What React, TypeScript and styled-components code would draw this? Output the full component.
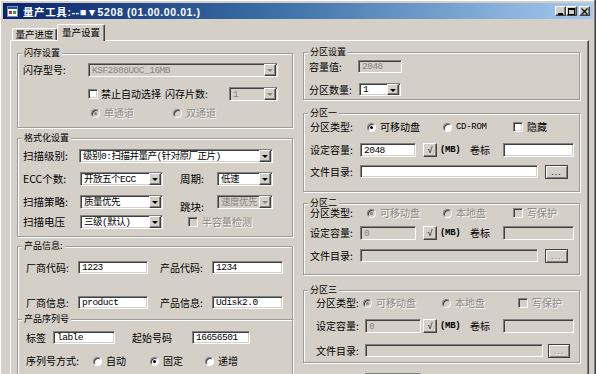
import React from 'react';
import styled, { createGlobalStyle, css } from 'styled-components';

const FACE = '#d4d0c8';

const GlobalStyle = createGlobalStyle`
  html, body {
    margin: 0;
    padding: 0;
    background: ${FACE};
  }
  body {
    font-family: "Noto Sans CJK SC", "Liberation Sans", sans-serif;
    color: #000;
  }
`;

const disabledText = css`
  color: #8a8780;
  text-shadow: 1px 1px 0 #fff;
`;

const raised = css`
  background: ${FACE};
  border: 1px solid;
  border-color: #fff #404040 #404040 #fff;
  box-shadow: inset -1px -1px 0 #808080;
  box-sizing: border-box;
`;

const sunken = css`
  border: 1px solid;
  border-color: #808080 #fff #fff #808080;
  box-shadow: inset 1px 1px 0 #404040, inset -1px -1px 0 ${FACE};
  box-sizing: border-box;
`;

const Window = styled.div`
  width: 596px;
  height: 374px;
  box-sizing: border-box;
  overflow: hidden;
  background: ${FACE};
  padding: 3px 3px 0 3px;
  display: flex;
  flex-direction: column;
  box-shadow: inset -1px 0 0 #404040, inset -2px 0 0 #808080, inset 1px 1px 0 #fff;
`;

const TitleBar = styled.div`
  height: 16px;
  flex: none;
  display: flex;
  align-items: center;
  gap: 5px;
  padding: 0 3px 0 4px;
  background: linear-gradient(to right, #0a246a 0%, #3a6ea5 45%, #a6caf0 100%);
  color: #fff;
  font: bold 10.5px "Liberation Sans", "Noto Sans CJK SC", sans-serif;
  letter-spacing: 0.6px;
  white-space: nowrap;
`;

const TitleButtons = styled.div`
  margin-left: auto;
  display: flex;
  align-items: center;
`;

const CapButton = styled.div<{ $gap?: number }>`
  ${raised};
  width: 11px;
  height: 10px;
  margin-left: ${p => p.$gap ?? 0}px;
  display: flex;
  align-items: center;
  justify-content: center;
`;

const TabStrip = styled.div`
  height: 16px;
  flex: none;
  margin-top: 5px;
  padding-left: 9px;
  display: flex;
  align-items: flex-end;
  position: relative;
  z-index: 1;
`;

const Tab = styled.div<{ $active?: boolean; $w: number }>`
  box-sizing: border-box;
  width: ${p => p.$w}px;
  height: ${p => (p.$active ? 17 : 12)}px;
  margin-bottom: ${p => (p.$active ? -1 : 0)}px;
  background: ${FACE};
  border-top: 1px solid #fff;
  border-left: 1px solid #fff;
  border-right: 1px solid #404040;
  box-shadow: inset -1px 0 0 #808080;
  border-radius: 2px 2px 0 0;
  display: flex;
  align-items: ${p => (p.$active ? 'flex-start' : 'center')};
  justify-content: center;
  padding-top: ${p => (p.$active ? 2 : 0)}px;
  font-size: 9.5px;
  line-height: 11px;
`;

const Panel = styled.div`
  flex: 1;
  margin: 0 4px 0 7px;
  border-top: 1px solid #fff;
  border-left: 1px solid #fff;
  border-right: 1px solid #404040;
  box-shadow: inset -1px 0 0 #808080;
  padding: 0 8px 0 6px;
  display: flex;
  gap: 10px;
  align-items: flex-start;
`;

const Column = styled.div<{ $w: number }>`
  width: ${p => p.$w}px;
  flex: none;
  display: flex;
  flex-direction: column;
`;

const Group = styled.div<{ $h: number; $mt: number; $pad: string; $open?: boolean }>`
  position: relative;
  box-sizing: border-box;
  height: ${p => p.$h}px;
  margin-top: ${p => p.$mt}px;
  padding: ${p => p.$pad};
  border: 1px solid #9c9a94;
  box-shadow: inset 1px 1px 0 #fff, 1px 1px 0 #fff;
  display: flex;
  flex-direction: column;
  ${p =>
    p.$open &&
    css`
      border-bottom: none;
      box-shadow: inset 1px 1px 0 #fff, 1px 0 0 #fff;
    `}
`;

const Caption = styled.span`
  position: absolute;
  top: -7px;
  left: 4px;
  padding: 0 2px;
  background: ${FACE};
  font-size: 9px;
  line-height: 11px;
  white-space: nowrap;
`;

const Row = styled.div<{ $h?: number; $mt?: number }>`
  display: flex;
  align-items: center;
  height: ${p => p.$h ?? 13}px;
  margin-top: ${p => p.$mt ?? 0}px;
`;

const Label = styled.span<{ $w?: number; $ml?: number; $dy?: number; $off?: boolean; $fs?: number; $mono?: boolean }>`
  flex: none;
  box-sizing: border-box;
  width: ${p => (p.$w ? `${p.$w}px` : 'auto')};
  margin-left: ${p => p.$ml ?? 0}px;
  padding-top: ${p => (p.$dy ? p.$dy * 2 : 0)}px;
  font-size: ${p => p.$fs ?? 10}px;
  line-height: 12px;
  white-space: nowrap;
  ${p =>
    p.$mono &&
    css`
      font-family: "Liberation Mono", "Noto Sans CJK SC", monospace;
      font-size: 9px;
      font-weight: bold;
      letter-spacing: -0.3px;
    `}
  ${p => p.$off && disabledText}
`;

const Field = styled.div<{ $w: number; $h?: number; $off?: boolean; $ml?: number }>`
  ${sunken};
  flex: none;
  width: ${p => p.$w}px;
  height: ${p => p.$h ?? 13}px;
  margin-left: ${p => p.$ml ?? 0}px;
  display: flex;
  align-items: center;
  padding: 0 1px 0 3px;
  background: ${p => (p.$off ? FACE : '#fff')};
  font-family: "Liberation Mono", "Noto Sans CJK SC", monospace;
  font-size: 9.5px;
  letter-spacing: -0.5px;
  line-height: 11px;
  color: ${p => (p.$off ? '#8a8780' : '#000')};
  white-space: nowrap;
  overflow: hidden;
`;

const Value = styled.span`
  flex: 1;
  overflow: hidden;
`;

const Arrow = styled.span<{ $off?: boolean }>`
  ${raised};
  flex: none;
  width: 12px;
  height: 100%;
  display: flex;
  align-items: center;
  justify-content: center;
  &::after {
    content: '';
    border-left: 3px solid transparent;
    border-right: 3px solid transparent;
    border-top: 3px solid ${p => (p.$off ? '#8a8780' : '#000')};
    margin-top: 1px;
  }
`;

const Btn = styled.div<{ $w: number; $h?: number; $ml?: number; $off?: boolean }>`
  ${raised};
  flex: none;
  width: ${p => p.$w}px;
  height: ${p => p.$h ?? 14}px;
  margin-left: ${p => p.$ml ?? 0}px;
  display: flex;
  align-items: center;
  justify-content: center;
  font: 9px "Liberation Sans", "Noto Sans CJK SC", sans-serif;
  color: ${p => (p.$off ? '#8a8780' : '#000')};
`;

const DotsBtn = styled(Btn)`
  border: 1px solid #404040;
  box-shadow: inset 1px 1px 0 #fff, inset -1px -1px 0 #808080;
  letter-spacing: 1px;
  ${p => p.$off && disabledText}
`;

const Option = styled.div<{ $w?: number; $ml?: number; $off?: boolean }>`
  flex: none;
  display: flex;
  align-items: center;
  gap: 4px;
  width: ${p => (p.$w ? `${p.$w}px` : 'auto')};
  margin-left: ${p => p.$ml ?? 0}px;
  font-size: 10px;
  line-height: 12px;
  white-space: nowrap;
  ${p => p.$off && disabledText}
`;

const Radio = styled.span<{ $on?: boolean; $off?: boolean }>`
  flex: none;
  width: 9px;
  height: 9px;
  box-sizing: border-box;
  border-radius: 50%;
  border: 1px solid #808080;
  border-right-color: #fff;
  border-bottom-color: #fff;
  background: ${p => (p.$off ? FACE : '#fff')};
  box-shadow: inset 1px 1px 0 #404040;
  display: flex;
  align-items: center;
  justify-content: center;
  text-shadow: none;
  &::after {
    content: '';
    display: ${p => (p.$on ? 'block' : 'none')};
    width: 3px;
    height: 3px;
    border-radius: 50%;
    background: ${p => (p.$off ? '#8a8780' : '#000')};
  }
`;

const Check = styled.span<{ $off?: boolean }>`
  ${sunken};
  flex: none;
  width: 10px;
  height: 10px;
  background: ${p => (p.$off ? FACE : '#fff')};
`;

const Mono = styled.span`
  font-family: "Liberation Mono", monospace;
  font-size: 9px;
  letter-spacing: -0.3px;
`;

const Stub = styled.div`
  ${sunken};
  width: 56px;
  height: 13px;
  margin: 10px 0 0 62px;
  background: ${FACE};
`;

function Combo({ w, h = 14, off, ml, children }: { w: number; h?: number; off?: boolean; ml?: number; children?: React.ReactNode }) {
  return (
    <Field $w={w} $h={h} $off={off} $ml={ml} style={{ paddingRight: 1 }}>
      <Value>{children}</Value>
      <Arrow $off={off} />
    </Field>
  );
}

function AppIcon() {
  return (
    <svg width="11" height="11" viewBox="0 0 11 11">
      <rect x="0.5" y="0.5" width="10" height="10" fill="#fff" stroke="#8090b0" />
      <rect x="1" y="1" width="9" height="2" fill="#2050a8" />
      <rect x="2" y="5" width="3" height="3" fill="#d03030" />
      <rect x="6" y="5" width="3" height="3" fill="#30a040" />
    </svg>
  );
}

interface PartProps {
  title: string;
  mt: number;
  h: number;
  pad: string;
  off?: boolean;
  second: string;
  third: string;
  cap: string;
  lw: [number, number];
  optW: [number, number];
  rowMt: [number, number];
  btnGap: number;
  dirW: number;
  dotsGap: number;
  dotsW: number;
}

function Partition(p: PartProps) {
  return (
    <Group $h={p.h} $mt={p.mt} $pad={p.pad}>
      <Caption>{p.title}</Caption>
      <Row $h={12}>
        <Label $w={p.lw[0]}>分区类型:</Label>
        <Option $w={p.optW[0]} $off={p.off}>
          <Radio $on $off={p.off} />
          可移动盘
        </Option>
        <Option $w={p.optW[1]} $off={p.off}>
          <Radio $off={p.off} />
          {p.second === 'CD-ROM' ? <Mono>CD-ROM</Mono> : p.second}
        </Option>
        <Option $off={p.off}>
          <Check $off={p.off} />
          {p.third}
        </Option>
      </Row>
      <Row $h={14} $mt={p.rowMt[0]}>
        <Label $w={p.lw[1]}>设定容量:</Label>
        <Field $w={56} $h={14} $off={p.off}>{p.cap}</Field>
        <Btn $w={14} $h={14} $ml={p.btnGap}>√</Btn>
        <Label $w={30} $ml={3} $mono>(MB)</Label>
        <Label $w={33}>卷标</Label>
        <Field $w={71} $h={14} $off={p.off} />
      </Row>
      <Row $h={13} $mt={p.rowMt[1]}>
        <Label $w={p.lw[1]}>文件目录:</Label>
        <Field $w={p.dirW} $h={13} $off={p.off} />
        <DotsBtn $w={p.dotsW} $h={14} $ml={p.dotsGap} $off={p.off}>...</DotsBtn>
      </Row>
    </Group>
  );
}

export default function App() {
  return (
    <>
      <GlobalStyle />
      <Window>
        <TitleBar>
          <AppIcon />
          <span>量产工具:--■▼5208 (01.00.00.01.)</span>
          <TitleButtons>
            <CapButton>
              <svg width="7" height="7" viewBox="0 0 7 7">
                <rect x="1" y="5" width="5" height="2" fill="#000" />
              </svg>
            </CapButton>
            <CapButton>
              <svg width="7" height="7" viewBox="0 0 7 7">
                <rect x="0.5" y="0.5" width="6" height="6" fill="none" stroke="#000" />
                <rect x="0" y="0" width="7" height="2" fill="#000" />
              </svg>
            </CapButton>
            <CapButton $gap={2}>
              <svg width="7" height="7" viewBox="0 0 7 7">
                <path d="M0.5 0.5 L6.5 6.5 M6.5 0.5 L0.5 6.5" stroke="#000" strokeWidth="1.3" />
              </svg>
            </CapButton>
          </TitleButtons>
        </TitleBar>

        <TabStrip>
          <Tab $w={45}>量产进度</Tab>
          <Tab $w={48} $active>量产设置</Tab>
        </TabStrip>

        <Panel>
          <Column $w={276}>
            <Group $h={75} $mt={12} $pad="9px 0 0 5px">
              <Caption>闪存设置</Caption>
              <Row $h={14}>
                <Label $w={65}>闪存型号:</Label>
                <Combo w={190} off>KSF2808UOC_16MB</Combo>
              </Row>
              <Row $h={14} $mt={10}>
                <Check style={{ marginLeft: 65 }} />
                <Label $w={64} $ml={3}>禁止自动选择</Label>
                <Label $w={64}>闪存片数:</Label>
                <Combo w={49} off>1</Combo>
              </Row>
              <Row $h={12} $mt={6}>
                <Option $w={82} $ml={68} $off>
                  <Radio $on $off />
                  单通道
                </Option>
                <Option $off>
                  <Radio $off />
                  双通道
                </Option>
              </Row>
            </Group>

            <Group $h={99} $mt={10} $pad="10px 0 0 5px">
              <Caption>格式化设置</Caption>
              <Row $h={14}>
                <Label $w={56} $fs={10.5}>扫描级别:</Label>
                <Combo w={194}>级别0:扫描并量产(针对原厂正片)</Combo>
              </Row>
              <Row $h={14} $mt={9}>
                <Label $w={57} $fs={10.5}>ECC个数:</Label>
                <Combo w={83}>开放五个ECC</Combo>
                <Label $w={37} $ml={17} $fs={10.5}>周期:</Label>
                <Combo w={56}>低速</Combo>
              </Row>
              <Row $h={14} $mt={9}>
                <Label $w={57} $fs={10.5}>扫描策略:</Label>
                <Combo w={83}>质量优先</Combo>
                <Label $w={37} $ml={17} $dy={5} $fs={10.5}>跳块:</Label>
                <Combo w={56} off>速度优先</Combo>
              </Row>
              <Row $h={14} $mt={6}>
                <Label $w={57} $fs={10.5}>扫描电压</Label>
                <Combo w={83}>三级(默认)</Combo>
                <Option $ml={25} $off>
                  <Check $off />
                  半容量检测
                </Option>
              </Row>
            </Group>

            <Group $h={73} $mt={9} $pad="14px 0 0 8px" $open>
              <Caption>产品信息:</Caption>
              <Row $h={13}>
                <Label $w={52}>厂商代码:</Label>
                <Field $w={70}>1223</Field>
                <Label $w={52} $ml={12}>产品代码:</Label>
                <Field $w={71}>1234</Field>
              </Row>
              <Row $h={13} $mt={22}>
                <Label $w={52}>厂商信息:</Label>
                <Field $w={70}>product</Field>
                <Label $w={52} $ml={12}>产品信息:</Label>
                <Field $w={71}>Udisk2.0</Field>
              </Row>
            </Group>

            <Group $h={70} $mt={0} $pad="11px 0 0 8px">
              <Caption>产品序列号</Caption>
              <Row $h={13}>
                <Label $w={27}>标签</Label>
                <Field $w={62}>lable</Field>
                <Label $w={60} $ml={17}>起始号码</Label>
                <Field $w={58}>16656501</Field>
              </Row>
              <Row $h={12} $mt={11}>
                <Label $w={67}>序列号方式:</Label>
                <Option $w={57}>
                  <Radio />
                  自动
                </Option>
                <Option $w={55}>
                  <Radio $on />
                  固定
                </Option>
                <Option>
                  <Radio />
                  递增
                </Option>
              </Row>
            </Group>
          </Column>

          <Column $w={277}>
            <Group $h={48} $mt={11} $pad="7px 0 0 5px">
              <Caption>分区设置</Caption>
              <Row $h={13}>
                <Label $w={49}>容量值:</Label>
                <Field $w={44} $off>2048</Field>
              </Row>
              <Row $h={13} $mt={10}>
                <Label $w={50}>分区数量:</Label>
                <Combo w={42} h={13}>1</Combo>
              </Row>
            </Group>

            <Partition
              title="分区一"
              mt={13}
              h={79}
              pad="7px 0 0 6px"
              second="CD-ROM"
              third="隐藏"
              cap="2048"
              lw={[57, 50]}
              optW={[76, 70]}
              rowMt={[10, 8]}
              btnGap={7}
              dirW={178}
              dotsGap={7}
              dotsW={23}
            />

            <Partition
              title="分区二"
              mt={11}
              h={72}
              pad="3px 0 0 6px"
              off
              second="本地盘"
              third="写保护"
              cap="0"
              lw={[57, 50]}
              optW={[76, 70]}
              rowMt={[7, 9]}
              btnGap={7}
              dirW={178}
              dotsGap={7}
              dotsW={23}
            />

            <Partition
              title="分区三"
              mt={15}
              h={73}
              pad="6px 0 0 12px"
              off
              second="本地盘"
              third="写保护"
              cap="0"
              lw={[47, 49]}
              optW={[79, 76]}
              rowMt={[10, 11]}
              btnGap={2}
              dirW={178}
              dotsGap={5}
              dotsW={22}
            />
            <Stub />
          </Column>
        </Panel>
      </Window>
    </>
  );
}
